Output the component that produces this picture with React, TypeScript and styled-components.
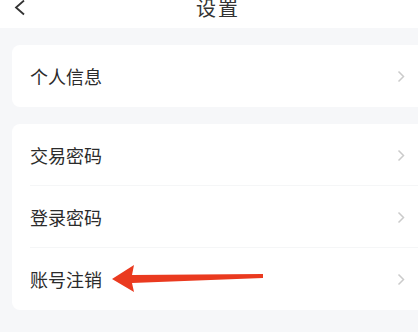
import React from "react";
import styled, { createGlobalStyle } from "styled-components";

const GlobalStyle = createGlobalStyle`
  html, body {
    margin: 0;
    padding: 0;
    background: #f6f7f9;
    font-family: "Noto Sans CJK SC", "Noto Sans", sans-serif;
    overflow: hidden;
  }
`;

const Page = styled.div`
  width: 418px;
  height: 332px;
  background: #f6f7f9;
  display: flex;
  flex-direction: column;
`;

const Header = styled.div`
  height: 28px;
  background: #fff;
  position: relative;
  display: flex;
  justify-content: center;
  padding-left: 18px;
`;

const Title = styled.div`
  font-size: 20px;
  line-height: 15px;
  color: #333;
  letter-spacing: 2px;
`;

const Back = styled.svg`
  position: absolute;
  left: 13px;
  top: 0;
`;

const Card = styled.div`
  margin: 17px 0 0 12px;
  background: #fff;
  border-radius: 8px 0 0 8px;
  display: flex;
  flex-direction: column;
`;

const Row = styled.div<{ divider?: boolean }>`
  position: relative;
  height: 62px;
  display: flex;
  align-items: center;
  justify-content: space-between;
  padding: 0 13px 0 18px;
  &::after {
    content: "";
    display: ${(p) => (p.divider ? "block" : "none")};
    position: absolute;
    left: 18px;
    right: 0;
    bottom: 0;
    height: 1px;
    background: #f5f6f7;
  }
`;

const Label = styled.span`
  font-size: 18px;
  color: #2b2b2b;
`;

const Arrow = styled.svg`
  position: absolute;
  left: 84px;
  top: 14px;
`;

const Chevron = () => (
  <svg width="8" height="13" viewBox="0 0 8 13">
    <path d="M1.5 1.5 L6.5 6.5 L1.5 11.5" fill="none" stroke="#cbcbcb" strokeWidth="1.5" />
  </svg>
);

const items1 = ["个人信息"];
const items2 = ["交易密码", "登录密码", "账号注销"];

export default function App() {
  return (
    <Page>
      <GlobalStyle />
      <Header>
        <Back width="14" height="16" viewBox="0 0 14 16">
          <path d="M11 0.5 L3 7.5 L11 14.5" fill="none" stroke="#333" strokeWidth="1.8" />
        </Back>
        <Title>设置</Title>
      </Header>
      <Card>
        {items1.map((t) => (
          <Row key={t}>
            <Label>{t}</Label>
            <Chevron />
          </Row>
        ))}
      </Card>
      <Card>
        {items2.map((t, i) => (
          <Row key={t} divider={i < items2.length - 1}>
            <Label>{t}</Label>
            {t === "账号注销" && (
              <Arrow width="170" height="32" viewBox="0 0 170 32">
                <path
                  d="M16 17 L38 3 L36 13 L167 12 L167 16 L36 21 L38 30 Z"
                  fill="#ea3a1f"
                />
              </Arrow>
            )}
            <Chevron />
          </Row>
        ))}
      </Card>
    </Page>
  );
}
